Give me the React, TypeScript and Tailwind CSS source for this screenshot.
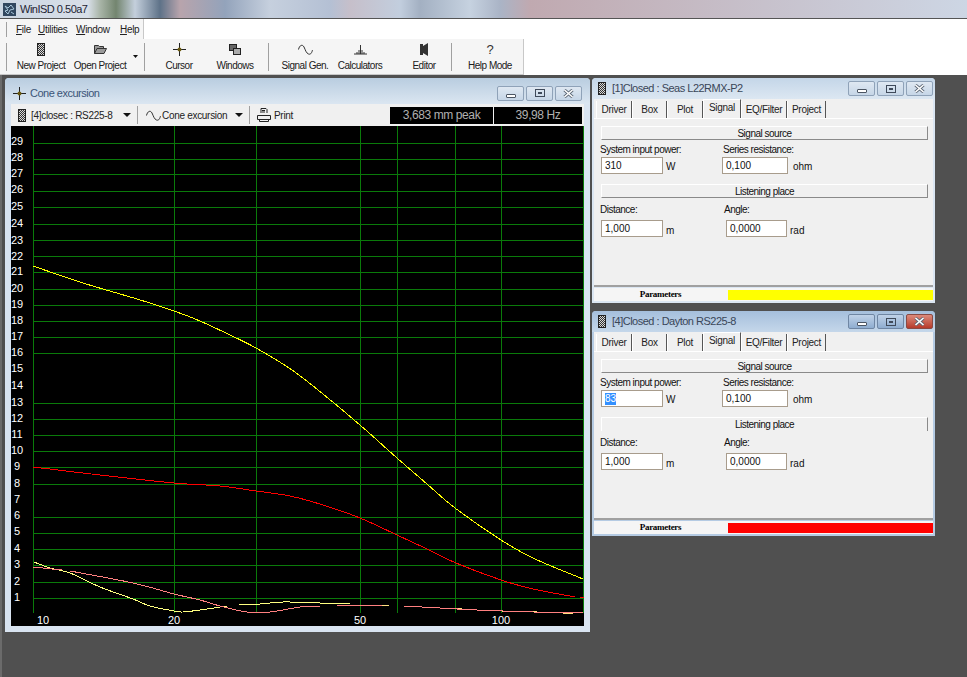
import React from 'react';

const FONT = "font-['Liberation_Sans',Arial,sans-serif]";

const HLINES = [143, 159, 174, 191, 207, 224, 240, 256, 272, 289, 305, 321, 337, 353, 403, 419, 435, 451, 467, 484, 517, 533, 549, 565, 582, 598];
const VLINES = [33, 174, 256, 360, 397, 455, 501, 583];
const Y_LABELS = [29, 28, 27, 26, 25, 24, 23, 22, 21, 20, 19, 18, 17, 16, 15, 14, 13, 12, 11, 10, 9, 8, 7, 6, 5, 4, 3, 2, 1];
const Y_POS = [145, 161, 177, 193, 210, 227, 244, 260, 275, 292, 308, 324, 340, 356, 372, 389, 406, 422, 438, 454, 470, 487, 503, 519, 535, 552, 568, 585, 601];

type Pt = [number, number];

// catmull-rom through the points read off the plot
const smooth = (pts: Pt[]) => {
  let d = `M${pts[0][0]} ${pts[0][1]}`;
  for (let i = 0; i < pts.length - 1; i++) {
    const p0 = pts[Math.max(i - 1, 0)];
    const p1 = pts[i];
    const p2 = pts[i + 1];
    const p3 = pts[Math.min(i + 2, pts.length - 1)];
    const c1x = p1[0] + (p2[0] - p0[0]) / 6;
    const c1y = p1[1] + (p2[1] - p0[1]) / 6;
    const c2x = p2[0] - (p3[0] - p1[0]) / 6;
    const c2y = p2[1] - (p3[1] - p1[1]) / 6;
    d += ` C${c1x} ${c1y} ${c2x} ${c2y} ${p2[0]} ${p2[1]}`;
  }
  return d;
};

const YELLOW: Pt[] = [[33, 266], [83, 283], [137, 299], [174, 311], [200, 321], [230, 335], [256, 348], [292, 370], [323, 394], [360, 425], [397, 458], [427, 484], [455, 508], [501, 540], [535, 559], [583, 579]];
const RED: Pt[] = [[33, 467], [100, 475], [174, 483], [220, 486], [256, 491], [290, 496], [323, 505], [360, 518], [397, 535], [427, 549], [456, 563], [501, 580], [533, 589], [575, 597]];
const PALE_A: Pt[] = [[34, 562], [50, 568], [70, 573], [100, 587], [133, 599], [150, 606], [174, 611], [183, 612], [200, 610], [227, 606]];
const PALE_B: Pt[] = [[239, 605], [260, 604], [283, 602], [320, 603], [350, 604]];
const PINK_A: Pt[] = [[33, 567], [62, 570]];
const PINK_B: Pt[] = [[70, 571], [133, 583], [174, 594], [200, 600], [220, 606], [247, 612], [270, 612], [300, 607], [320, 606]];
const PINK_C: Pt[] = [[337, 605], [382, 605]];
const PINK_D: Pt[] = [[404, 606], [440, 608], [477, 610], [533, 612], [583, 613]];

const DriverIcon = () => (
  <svg width="8" height="13" viewBox="0 0 8 13" className="shrink-0">
    <defs>
      <pattern id="dith" width="2" height="2" patternUnits="userSpaceOnUse">
        <rect width="2" height="2" fill="#d8d8d8" />
        <rect width="1" height="1" fill="#333" />
        <rect x="1" y="1" width="1" height="1" fill="#333" />
      </pattern>
    </defs>
    <rect x="0.5" y="0.5" width="7" height="12" fill="url(#dith)" stroke="#222" />
  </svg>
);

const Triangle = ({ small }: { small?: boolean }) => (
  <svg width={small ? 5 : 8} height={small ? 3 : 4} viewBox="0 0 8 4" preserveAspectRatio="none" className="shrink-0">
    <path d="M0 0h8L4 4z" fill="#111" />
  </svg>
);

const Crosshair = () => (
  <svg width="13" height="13" viewBox="0 0 13 13" className="shrink-0">
    <path d="M6.5 0v13M0 6.5h13" stroke="#222" fill="none" />
    <circle cx="6.5" cy="6.5" r="2" fill="#6b5a10" />
  </svg>
);

const SineIcon = () => (
  <svg width="15" height="11" viewBox="0 0 15 11" className="shrink-0">
    <path d="M0.5 5.5C1.5 1 4.5 0 6 3S8 9 10.5 10s3.5-2 4-4" stroke="#333" fill="none" />
  </svg>
);

const Separator = ({ className = 'h-[22px]' }: { className?: string }) => (
  <div className={`w-[1px] bg-[#a0a0a0] shrink-0 ${className}`} />
);

const ToolButton = ({ icon, label, className }: { icon: React.ReactNode; label: string; className: string }) => (
  <div className={`flex flex-col items-center shrink-0 ${className}`}>
    <div className="h-[15px] flex items-center justify-center">{icon}</div>
    <span className="mt-[3px] text-[10px] leading-[12px] tracking-[-0.5px] whitespace-nowrap text-[#202020]">{label}</span>
  </div>
);

const TitleButton = ({ kind, active }: { kind: 'min' | 'max' | 'close'; active?: boolean }) => {
  const skin =
    kind === 'close' && active
      ? 'bg-gradient-to-b from-[#dc8a7c] to-[#b63a2b] border-[#8a4a44]'
      : active
        ? 'bg-gradient-to-b from-[#c0d2e8] to-[#8fadd0] border-[#6f86a3]'
        : 'bg-gradient-to-b from-[#dfe8f2] to-[#c6d6e7] border-[#8fa2b8]';
  return (
    <div className={`w-[27px] h-[15px] rounded-[2px] border flex items-center justify-center ${skin}`}>
      {kind === 'min' && <div className="w-[10px] h-[4px] mt-[5px] bg-white border border-[#4b5563] rounded-[1px]" />}
      {kind === 'max' && (
        <div className="w-[10px] h-[8px] border border-[#3f4a5a] flex items-center justify-center">
          <div className="w-[4px] h-[2px] border border-[#3f4a5a]" />
        </div>
      )}
      {kind === 'close' && (
        <svg width="11" height="9" viewBox="0 0 11 9">
          <path d="M1.5 1l8 7M9.5 1l-8 7" stroke="#5b6675" strokeWidth="3.2" />
          <path d="M1.5 1l8 7M9.5 1l-8 7" stroke="#fff" strokeWidth="1.6" />
        </svg>
      )}
    </div>
  );
};

const WindowButtons = ({ active, className = '' }: { active?: boolean; className?: string }) => (
  <div className={`flex gap-[2px] ${className}`}>
    <TitleButton kind="min" active={active} />
    <TitleButton kind="max" active={active} />
    <TitleButton kind="close" active={active} />
  </div>
);

const SectionBar = ({ label, open }: { label: string; open?: boolean }) => (
  <div
    className={`ml-[7px] w-[327px] h-[14px] flex items-center justify-center text-[10px] tracking-[-0.5px] text-[#111] border-t border-l border-white border-r border-r-[#8a8a8a] ${open ? '' : 'border-b border-b-[#8a8a8a]'}`}
  >
    {label}
  </div>
);

const Field = ({ value, className, selected }: { value: string; className: string; selected?: boolean }) => (
  <div className={`h-[17px] bg-white border border-[#a89c8c] pl-[3px] flex items-center text-[10px] shrink-0 ${className}`}>
    <span className={selected ? 'bg-[#3390ff] text-white' : 'text-[#111]'}>{value}</span>
  </div>
);

const TABS = [
  { label: 'Driver', w: 'w-[36px]' },
  { label: 'Box', w: 'w-[35px]' },
  { label: 'Plot', w: 'w-[36px]' },
  { label: 'Signal', w: 'w-[38px]', on: true },
  { label: 'EQ/Filter', w: 'w-[46px]' },
  { label: 'Project', w: 'w-[39px]' },
];

const ParamWindow = ({ title, color, active, power, series, selected }: { title: string; color: string; active?: boolean; power: string; series: string; selected?: boolean }) => (
  <div className={`w-[343px] h-[225px] rounded-t-[4px] px-[2px] pb-[2px] flex flex-col ${active ? 'bg-[#b5cbe3]' : 'bg-[#dbe6f2]'}`}>
    <div className={`h-[21px] -mx-[2px] px-[6px] rounded-t-[4px] flex items-center bg-gradient-to-b ${active ? 'from-[#a5bfdc] to-[#c5d7ea]' : 'from-[#c4d6e8] to-[#dce7f2]'}`}>
      <DriverIcon />
      <span className="ml-[6px] text-[11px] tracking-[-0.5px] text-[#3a4658] whitespace-nowrap">{title}</span>
      <WindowButtons active={active} className="ml-auto -mr-[4px]" />
    </div>
    <div className="h-[19px] pl-[2px] flex items-end bg-[#f0f0f0]">
      {TABS.map((tab) => (
        <div
          key={tab.label}
          className={`flex items-center justify-center text-[10px] tracking-[-0.3px] text-[#222] border-r border-r-[#555] border-l border-l-white ${tab.w} ${tab.on ? 'h-[19px] pb-[3px] border-t border-t-white bg-[#f0f0f0]' : 'h-[17px] bg-[#f0f0f0]'}`}
        >
          {tab.label}
        </div>
      ))}
    </div>
    <div className="h-[169px] bg-[#f0f0f0] border-t border-white border-b-2 border-b-[#a0a0a0] pt-[7px] text-[#111]">
      <SectionBar label="Signal source" />
      <div className="mt-[3px] h-[13px] flex items-center text-[10px] tracking-[-0.5px] pl-[6px]">
        <span className="w-[123px]">System input power:</span>
        <span>Series resistance:</span>
      </div>
      <div className="mt-[1px] h-[17px] flex items-start pl-[7px] text-[10px] leading-[12px]">
        <Field value={power} selected={selected} className="w-[62px]" />
        <span className="ml-[3px] w-[56px] mt-[4px]">W</span>
        <Field value={series} className="w-[66px]" />
        <span className="ml-[5px] mt-[4px]">ohm</span>
      </div>
      <div className="mt-[10px]">
        <SectionBar label="Listening place" open={active} />
      </div>
      <div className="mt-[5px] h-[13px] flex items-center text-[10px] tracking-[-0.5px] pl-[6px]">
        <span className="w-[124px]">Distance:</span>
        <span>Angle:</span>
      </div>
      <div className="mt-[4px] h-[17px] flex items-start pl-[7px] text-[10px] leading-[12px]">
        <Field value="1,000" className="w-[62px]" />
        <span className="ml-[3px] w-[60px] mt-[5px]">m</span>
        <Field value="0,0000" className="w-[61px]" />
        <span className="ml-[3px] mt-[5px]">rad</span>
      </div>
    </div>
    <div className="h-[13px] mt-[1px] flex bg-[#f5f5f5]">
      <div className="w-[133px] flex items-center justify-center text-[9px] tracking-[-0.3px] font-bold font-['Liberation_Serif',serif] text-black">Parameters</div>
      <div className={`flex-1 mt-[2px] mb-[1px] ml-[1px] ${color}`} />
    </div>
  </div>
);

const ChartPanel = () => (
  <svg width="573" height="500" viewBox="11 126 573 500" className="block bg-black font-['Liberation_Sans',Arial,sans-serif]">
    <g shapeRendering="crispEdges" stroke="#0a7a0a" strokeWidth="1">
      {HLINES.map((y) => (
        <line key={y} x1="33" x2="584" y1={y + 0.5} y2={y + 0.5} />
      ))}
      {VLINES.map((x) => (
        <line key={x} x1={x + 0.5} x2={x + 0.5} y1="126" y2="613" />
      ))}
    </g>
    {Y_LABELS.map((n, i) => (
      <text key={n} x="17" y={Y_POS[i]} fontSize="11" fill="#fff" textAnchor="middle">{n}</text>
    ))}
    <g fontSize="11" fill="#fff" textAnchor="middle">
      <text x="43" y="624">10</text>
      <text x="174" y="624">20</text>
      <text x="360" y="624">50</text>
      <text x="501" y="624">100</text>
    </g>
    <g fill="none" strokeWidth="1" shapeRendering="crispEdges">
      <path stroke="#ffff00" d={smooth(YELLOW)} />
      <path stroke="#ff0000" d={smooth(RED)} />
      <path stroke="#ff0000" d="M580 597H584" />
      <path stroke="#ffff80" d={smooth(PALE_A)} />
      <path stroke="#ffff80" d={smooth(PALE_B)} />
      <path stroke="#ffe080" d="M350 605H371M381 605H389M458 608H462M478 610H483M502 611H507M528 611H537M563 613H573" />
      <path stroke="#ff8080" d={smooth(PINK_A)} />
      <path stroke="#ff8080" d={smooth(PINK_B)} />
      <path stroke="#ff8080" d={smooth(PINK_C)} />
      <path stroke="#ff8080" d={smooth(PINK_D)} />
    </g>
  </svg>
);

const App = () => {
  return (
    <div className={`w-full h-screen overflow-hidden flex flex-col bg-[#505050] ${FONT}`}>
      {/* Blurred title bar */}
      <div className="h-[19px] shrink-0 flex items-center pl-[3px] border-b border-[#555] bg-[linear-gradient(90deg,#ccd6e2_0,#d8dfe8_88px,#a9b5a8_100px,#73856f_116px,#c4cfdc_135px,#5e7288_160px,#b8a4ac_180px,#93a3bb_225px,#c6d0de_270px,#b4c0d4_330px,#c6bfca_350px,#c2cede_400px,#a3b0c2_420px,#c6d2e0_470px,#aab4c6_500px,#c0a9b0_530px,#cdd6e4_967px)]">
        <svg width="13" height="13" viewBox="0 0 13 13" className="shrink-0">
          <rect width="13" height="13" fill="#31475f" />
          <path d="M2 3l3 2 3-3 3 4-4 1-2 4-3-3 3-1zM8 9l3 2" stroke="#a9c8dc" fill="none" />
        </svg>
        <span className="ml-[4px] text-[11px] tracking-[-0.5px] text-[#1d2433] whitespace-nowrap">WinISD 0.50a7</span>
      </div>

      {/* Menu bar */}
      <div className="h-[20px] shrink-0 bg-white flex">
        <div className="w-[144px] flex items-center pl-[6px] bg-[#f5f5f5] border-r border-[#c8c8c8]">
          <div className="w-[1px] h-[15px] bg-[#a0a0a0]" />
          <div className="ml-[9px] flex text-[10px] tracking-[-0.3px] text-[#222]">
            <span className="w-[22px]"><u>F</u>ile</span>
            <span className="w-[38px]"><u>U</u>tilities</span>
            <span className="w-[44px]"><u>W</u>indow</span>
            <span><u>H</u>elp</span>
          </div>
        </div>
      </div>

      {/* Main toolbar */}
      <div className="h-[36px] shrink-0 bg-white flex">
        <div className="w-[524px] flex items-center pl-[6px] bg-[#f5f5f5] border-r border-b border-[#c8c8c8]">
          <Separator className="h-[28px]" />
          <ToolButton className="ml-[4px] w-[60px]" label="New Project" icon={<DriverIcon />} />
          <ToolButton
            className="w-[58px]"
            label="Open Project"
            icon={
              <svg width="13" height="10" viewBox="0 0 13 10">
                <path d="M0.5 9.5v-8h4l1 1h4v2M0.5 9.5l2.5-5h9.5l-2.5 5z" fill="#9a9a9a" stroke="#333" />
              </svg>
            }
          />
          <div className="w-[15px] pl-[4px]"><Triangle small /></div>
          <Separator className="h-[28px]" />
          <ToolButton className="w-[68px]" label="Cursor" icon={<Crosshair />} />
          <ToolButton
            className="w-[44px]"
            label="Windows"
            icon={
              <svg width="12" height="11" viewBox="0 0 12 11">
                <rect x="0.5" y="0.5" width="7" height="6" fill="#666" stroke="#222" />
                <rect x="4.5" y="4.5" width="7" height="6" fill="#aaa" stroke="#222" />
              </svg>
            }
          />
          <div className="w-[11px]" />
          <Separator className="h-[28px]" />
          <ToolButton className="w-[72px]" label="Signal Gen." icon={<SineIcon />} />
          <ToolButton
            className="w-[38px]"
            label="Calculators"
            icon={
              <svg width="13" height="11" viewBox="0 0 13 11">
                <path d="M0 10h13M3 10V8M5 10V6M6.5 10V1M8 10V6M10 10V8" stroke="#333" fill="none" />
              </svg>
            }
          />
          <ToolButton
            className="ml-[18px] w-[54px]"
            label="Editor"
            icon={
              <svg width="8" height="13" viewBox="0 0 8 13">
                <path d="M0 1h3v11H0zM3 3l5-3v13l-5-3z" fill="#333" />
              </svg>
            }
          />
          <Separator className="h-[28px]" />
          <ToolButton
            className="ml-[6px] w-[64px]"
            label="Help Mode"
            icon={<span className="text-[13px] leading-[13px] text-[#333]">?</span>}
          />
        </div>
      </div>

      {/* Workspace */}
      <div className="flex-1 flex items-start pt-[3px] pl-[5px] gap-[2px] border-l-2 border-[#6b6b6b]">
        <div className="-ml-[2px] w-[585px] h-[554px] rounded-t-[4px] bg-[#d9e4f1] flex flex-col">
          <div className="h-[26px] px-[8px] pt-[4px] rounded-t-[4px] flex items-center bg-gradient-to-b from-[#b9cde0] to-[#dbe6f1]">
            <Crosshair />
            <span className="ml-[4px] text-[11px] tracking-[-0.5px] text-[#3b5578]">Cone excursion</span>
            <WindowButtons className="ml-auto" />
          </div>
          <div className="mx-[6px] h-[22px] flex items-center bg-[#f0f0f0] pl-[7px] text-[10px] tracking-[-0.3px] text-[#222]">
            <DriverIcon />
            <span className="ml-[5px] w-[92px] whitespace-nowrap">[4]closec : RS225-8</span>
            <Triangle />
            <div className="ml-[6px]"><Separator className="h-[18px]" /></div>
            <div className="ml-[8px]"><SineIcon /></div>
            <span className="ml-[1px] w-[73px] whitespace-nowrap">Cone excursion</span>
            <Triangle />
            <div className="ml-[6px]"><Separator className="h-[18px]" /></div>
            <svg width="14" height="14" viewBox="0 0 14 14" className="ml-[7px] shrink-0">
              <path d="M4 5V0.5h5l1 1V5M0.5 7.5h13v4h-13zM2.5 11.5v2h9v-2M5 2.5h3M5 4h3" fill="none" stroke="#222" />
            </svg>
            <span className="ml-[3px]">Print</span>
            <div className="ml-auto mr-[2px] flex gap-[1px] text-[#b0b0b0] text-[12px] tracking-[-0.4px]">
              <div className="w-[103px] h-[17px] bg-black flex items-center justify-center">3,683 mm peak</div>
              <div className="w-[88px] h-[17px] bg-black flex items-center justify-center">39,98 Hz</div>
            </div>
          </div>
          <div className="mx-[6px]">
            <ChartPanel />
          </div>
        </div>
        <div className="flex flex-col gap-[8px]">
          <ParamWindow title="[1]Closed : Seas L22RMX-P2" color="bg-[#ffff00]" power="310" series="0,100" />
          <ParamWindow title="[4]Closed : Dayton RS225-8" color="bg-[#ff0000]" power="83" series="0,100" selected active />
        </div>
      </div>
    </div>
  );
};

export default App;
